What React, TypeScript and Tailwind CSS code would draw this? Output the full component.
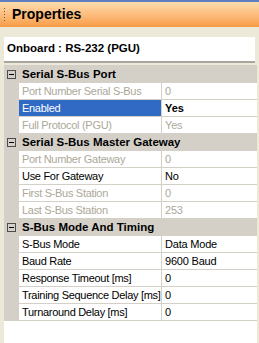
import React from "react";

type Row = {
    label: string;
    value: string;
    disabled?: boolean;
    selected?: boolean;
};

type Section = {
    title: string;
    rows: Row[];
};

const sections: Section[] = [
    {
        title: "Serial S-Bus Port",
        rows: [
            { label: "Port Number Serial S-Bus", value: "0", disabled: true },
            { label: "Enabled", value: "Yes", selected: true },
            { label: "Full Protocol (PGU)", value: "Yes", disabled: true },
        ],
    },
    {
        title: "Serial S-Bus Master Gateway",
        rows: [
            { label: "Port Number Gateway", value: "0", disabled: true },
            { label: "Use For Gateway", value: "No" },
            { label: "First S-Bus Station", value: "0", disabled: true },
            { label: "Last S-Bus Station", value: "253", disabled: true },
        ],
    },
    {
        title: "S-Bus Mode And Timing",
        rows: [
            { label: "S-Bus Mode", value: "Data Mode" },
            { label: "Baud Rate", value: "9600 Baud" },
            { label: "Response Timeout [ms]", value: "0" },
            { label: "Training Sequence Delay [ms]", value: "0" },
            { label: "Turnaround Delay [ms]", value: "0" },
        ],
    },
];

function MinusBox() {
    return (
        <span className="flex h-[9px] w-[9px] items-center justify-center border border-[#4d4d4d] bg-[#d4d0c8]">
            <span className="h-px w-[5px] bg-black" />
        </span>
    );
}

function SectionHeader({ title }: { title: string }) {
    return (
        <div className="flex h-[17px] items-center bg-[#d4d0c8]">
            <div className="flex w-[15px] items-center justify-center">
                <MinusBox />
            </div>
            <span className="pl-[3px] text-[11.5px] font-bold text-black whitespace-nowrap">
                {title}
            </span>
        </div>
    );
}

function PropRow({ row }: { row: Row }) {
    const labelClass = row.selected
        ? "bg-[#316ac5] text-white"
        : row.disabled
            ? "bg-white text-[#aca899]"
            : "bg-white text-black";
    const valueClass = row.selected
        ? "font-bold text-black tracking-normal"
        : row.disabled
            ? "text-[#aca899]"
            : "text-black";
    return (
        <div className="flex h-[17px]">
            <div className="w-[15px] shrink-0 bg-[#d4d0c8]" />
            <div
                className={`w-[142px] shrink-0 overflow-hidden whitespace-nowrap border-b border-[#d4d0c8] pl-[3px] text-[11px] leading-[16px] tracking-[-0.3px] ${labelClass}`}
            >
                {row.label}
            </div>
            <div
                className={`flex-1 overflow-hidden whitespace-nowrap border-b border-l border-[#d4d0c8] bg-white pl-[3px] text-[11px] leading-[16px] tracking-[-0.2px] ${valueClass}`}
            >
                {row.value}
            </div>
        </div>
    );
}

export default function App() {
    return (
        <div
            className="flex h-[343px] w-[259px] flex-col overflow-hidden bg-[#ece9d8]"
            style={{ fontFamily: '"Liberation Sans", Arial, sans-serif' }}
        >
            <div className="flex h-[27px] shrink-0 items-center border-t-2 border-[#5f7fbf] bg-gradient-to-b from-[#fedcae] to-[#f89c44]">
                <div className="ml-[4px] flex flex-col gap-[2px]">
                    {[0, 1, 2, 3, 4].map((i) => (
                        <span key={i} className="h-px w-px bg-[#6b5a40]" />
                    ))}
                </div>
                <span className="ml-[7px] text-[14px] font-bold text-black">
                    Properties
                </span>
            </div>

            <div className="h-[10px] shrink-0" />

            <div className="mx-[4px] flex h-[26px] shrink-0 items-center border-b-2 border-[#a8a69c] bg-white pl-[3px]">
                <span className="text-[11.5px] font-bold text-black">
                    Onboard : RS-232 (PGU)
                </span>
            </div>

            <div className="ml-[4px] mr-[2px] mt-[2px] flex-1 border-t border-[#d4d0c8] bg-white">
                {sections.map((section) => (
                    <div key={section.title}>
                        <SectionHeader title={section.title} />
                        {section.rows.map((row) => (
                            <PropRow key={row.label} row={row} />
                        ))}
                    </div>
                ))}
            </div>
        </div>
    );
}
